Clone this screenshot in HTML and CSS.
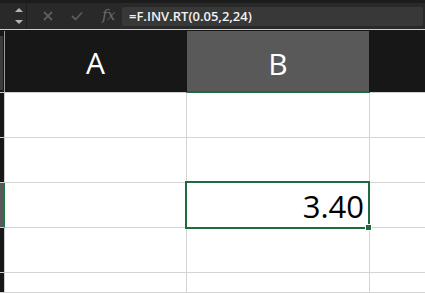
FILE: index.html
```html
<!DOCTYPE html>
<html>
<head>
<meta charset="utf-8">
<link rel="stylesheet" href="styles.css">
</head>
<body>
<div class="toolbar">
  <div class="spin">
    <svg width="10" height="18" viewBox="0 0 10 18"><path d="M1 5 L5 1 L9 5 Z" fill="#b4b4b4"/><path d="M1 13 L5 17 L9 13 Z" fill="#b4b4b4"/></svg>
  </div>
  <div class="tools">
    <svg class="ic" width="10" height="10" viewBox="0 0 10 10"><path d="M1 1 L9 9 M9 1 L1 9" stroke="#5c5c5c" stroke-width="1.8"/></svg>
    <svg class="ic ok" width="12" height="10" viewBox="0 0 12 10"><path d="M1 5 L4.5 8.5 L11 1.5" stroke="#5c5c5c" stroke-width="1.8" fill="none"/></svg>
    <span class="fx">fx</span>
  </div>
  <div class="formula">=F.INV.RT(0.05,2,24)</div>
</div>
<div class="rule"></div>
<div class="sheet">
  <div class="corner"><div class="corner-in"></div></div>
  <div class="colhead">A</div>
  <div class="colhead sel">B</div>
  <div class="colhead rest"></div>

  <div class="rowhead"></div><div class="cell"></div><div class="cell"></div><div class="cell last"></div>
  <div class="rowhead"></div><div class="cell"></div><div class="cell"></div><div class="cell last"></div>
  <div class="rowhead selrow"></div><div class="cell"></div><div class="cell active"><span class="val">3.40</span><div class="selbox"><div class="handle"></div></div></div><div class="cell last"></div>
  <div class="rowhead"></div><div class="cell"></div><div class="cell"></div><div class="cell last"></div>
  <div class="rowhead"></div><div class="cell"></div><div class="cell"></div><div class="cell last"></div>
</div>
</body>
</html>
```
FILE: styles.css
```css
html, body {
  margin: 0;
  padding: 0;
  background: #171717;
  overflow: hidden;
  width: 425px;
  height: 293px;
}
.toolbar {
  height: 26px;
  border-top: 3px solid #1c1c1c;
  background: #292929;
  display: flex;
  align-items: center;
}
.spin {
  width: 27px;
  height: 100%;
  border-right: 1px solid #1f1f1f;
  display: flex;
  justify-content: flex-end;
  align-items: center;
  box-sizing: border-box;
}
.spin svg {
  margin-right: 2px;
}
.tools {
  display: flex;
  align-items: center;
  width: 95px;
  height: 100%;
}
.tools .ic {
  margin-left: 16px;
}
.tools .ok {
  margin-left: 18px;
}
.fx {
  font-family: "DejaVu Serif", "Liberation Serif", serif;
  font-style: italic;
  font-size: 15px;
  color: #6a6a6a;
  margin-left: 19px;
  letter-spacing: -0.5px;
  margin-top: -2px;
}
.formula {
  flex: 1;
  margin-right: 2px;
  height: 19px;
  background: #383838;
  border-radius: 2px;
  font-family: "Open Sans", "Liberation Sans", sans-serif;
  font-weight: 600;
  font-size: 13px;
  line-height: 19px;
  color: #f2f2f2;
  padding-left: 7px;
  box-sizing: border-box;
  margin-top: 1px;
}
.rule {
  height: 1px;
  background: #cdcdcd;
  border-bottom: 1px solid #171717;
}
.sheet {
  display: grid;
  grid-template-columns: 5px 182px 183px 1fr;
  grid-template-rows: 62px repeat(4, 45px) 1fr;
  height: 262px;
  overflow: hidden;
  background: #ffffff;
}
.corner {
  background: #171717;
  border-right: 1px solid #9a9a9a;
  border-bottom: 1px solid #cfcfcf;
  box-sizing: border-box;
  padding-top: 5px;
}
.corner-in {
  width: 3px;
  height: 54px;
  background: #3c3c3c;
}
.colhead {
  background: #171717;
  color: #ffffff;
  font-family: "Open Sans", "Liberation Sans", sans-serif;
  font-size: 30px;
  font-weight: 500;
  display: flex;
  align-items: center;
  justify-content: center;
  border-right: 1px solid #171717;
  border-bottom: 1px solid #cfcfcf;
  box-sizing: border-box;
  padding-top: 2px;
}
.colhead.sel {
  background: #595959;
  border-bottom: 2px solid #1e6b40;
  padding-top: 4px;
}
.colhead.rest {
  border-right: none;
}
.rowhead {
  background: #171717;
  border-right: 1px solid #cfcfcf;
  border-bottom: 1px solid #cfcfcf;
  box-sizing: border-box;
}
.rowhead.selrow {
  background: #595959;
  border-right: 1px solid #1e7a45;
}
.cell {
  border-right: 1px solid #d4d4d4;
  border-bottom: 1px solid #d4d4d4;
  box-sizing: border-box;
}
.cell.last {
  border-right: none;
}
.cell.active {
  position: relative;
  display: flex;
  align-items: center;
  justify-content: flex-end;
}
.val {
  font-family: "Open Sans", "Liberation Sans", sans-serif;
  font-size: 31px;
  font-weight: 500;
  color: #000;
  padding-right: 5px;
  padding-top: 2px;
}
.selbox {
  position: absolute;
  left: -2px;
  top: -2px;
  right: -1px;
  bottom: -2px;
  border: 2px solid #1e6b40;
}
.handle {
  position: absolute;
  right: -4px;
  bottom: -4px;
  width: 5px;
  height: 5px;
  background: #1e6b40;
  border: 1px solid #ffffff;
}
```
